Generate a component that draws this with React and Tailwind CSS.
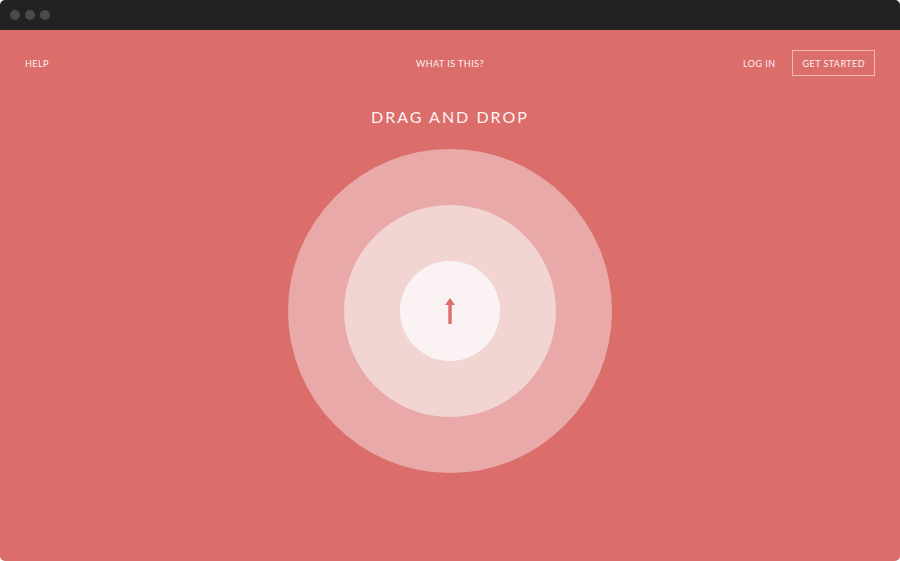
export default function App() {
  const font = { fontFamily: "Lato, 'Open Sans', sans-serif" };
  return (
    <div className="w-[900px] h-[561px] bg-white" style={font}>
      <div className="w-full h-full rounded-[5px] overflow-hidden flex flex-col">
        <div className="h-[30px] bg-[#222222] flex items-center gap-[5px] pl-[10px] shrink-0">
          <span className="w-[10px] h-[10px] rounded-full bg-[#4b4b4b]" />
          <span className="w-[10px] h-[10px] rounded-full bg-[#4b4b4b]" />
          <span className="w-[10px] h-[10px] rounded-full bg-[#4b4b4b]" />
        </div>
        <div className="flex-1 bg-[#db6d6b] flex flex-col">
          <div className="mt-[20px] px-[25px] h-[26px] grid grid-cols-3 items-center text-[9px] tracking-[0.45px] text-[#fdf1f1]">
            <div className="justify-self-start pt-[2px]">HELP</div>
            <div className="justify-self-center pt-[2px]">WHAT IS THIS?</div>
            <div className="justify-self-end flex items-center gap-[17px]">
              <span className="pt-[2px]">LOG IN</span>
              <span className="h-[26px] px-[9px] pt-[2px] border border-[#f0b9b8] flex items-center">GET STARTED</span>
            </div>
          </div>
          <h1 className="mt-[31px] h-[20px] leading-[20px] text-center text-[#fdf3f3] text-[16px] tracking-[2px]">
            DRAG AND DROP
          </h1>
          <div className="mt-[22px] flex justify-center">
            <div className="w-[324px] h-[324px] rounded-full bg-[#e8a9a8] flex items-center justify-center">
              <div className="w-[212px] h-[212px] rounded-full bg-[#f2d4d3] flex items-center justify-center">
                <div className="w-[100px] h-[100px] rounded-full bg-[#fbf3f3] flex items-center justify-center">
                  <svg width="12" height="28" viewBox="0 0 12 28">
                    <path d="M6 1 L11 8 L7.7 8 L7.7 27 L4.3 27 L4.3 8 L1 8 Z" fill="#db6d6b" />
                  </svg>
                </div>
              </div>
            </div>
          </div>
        </div>
      </div>
    </div>
  );
}
